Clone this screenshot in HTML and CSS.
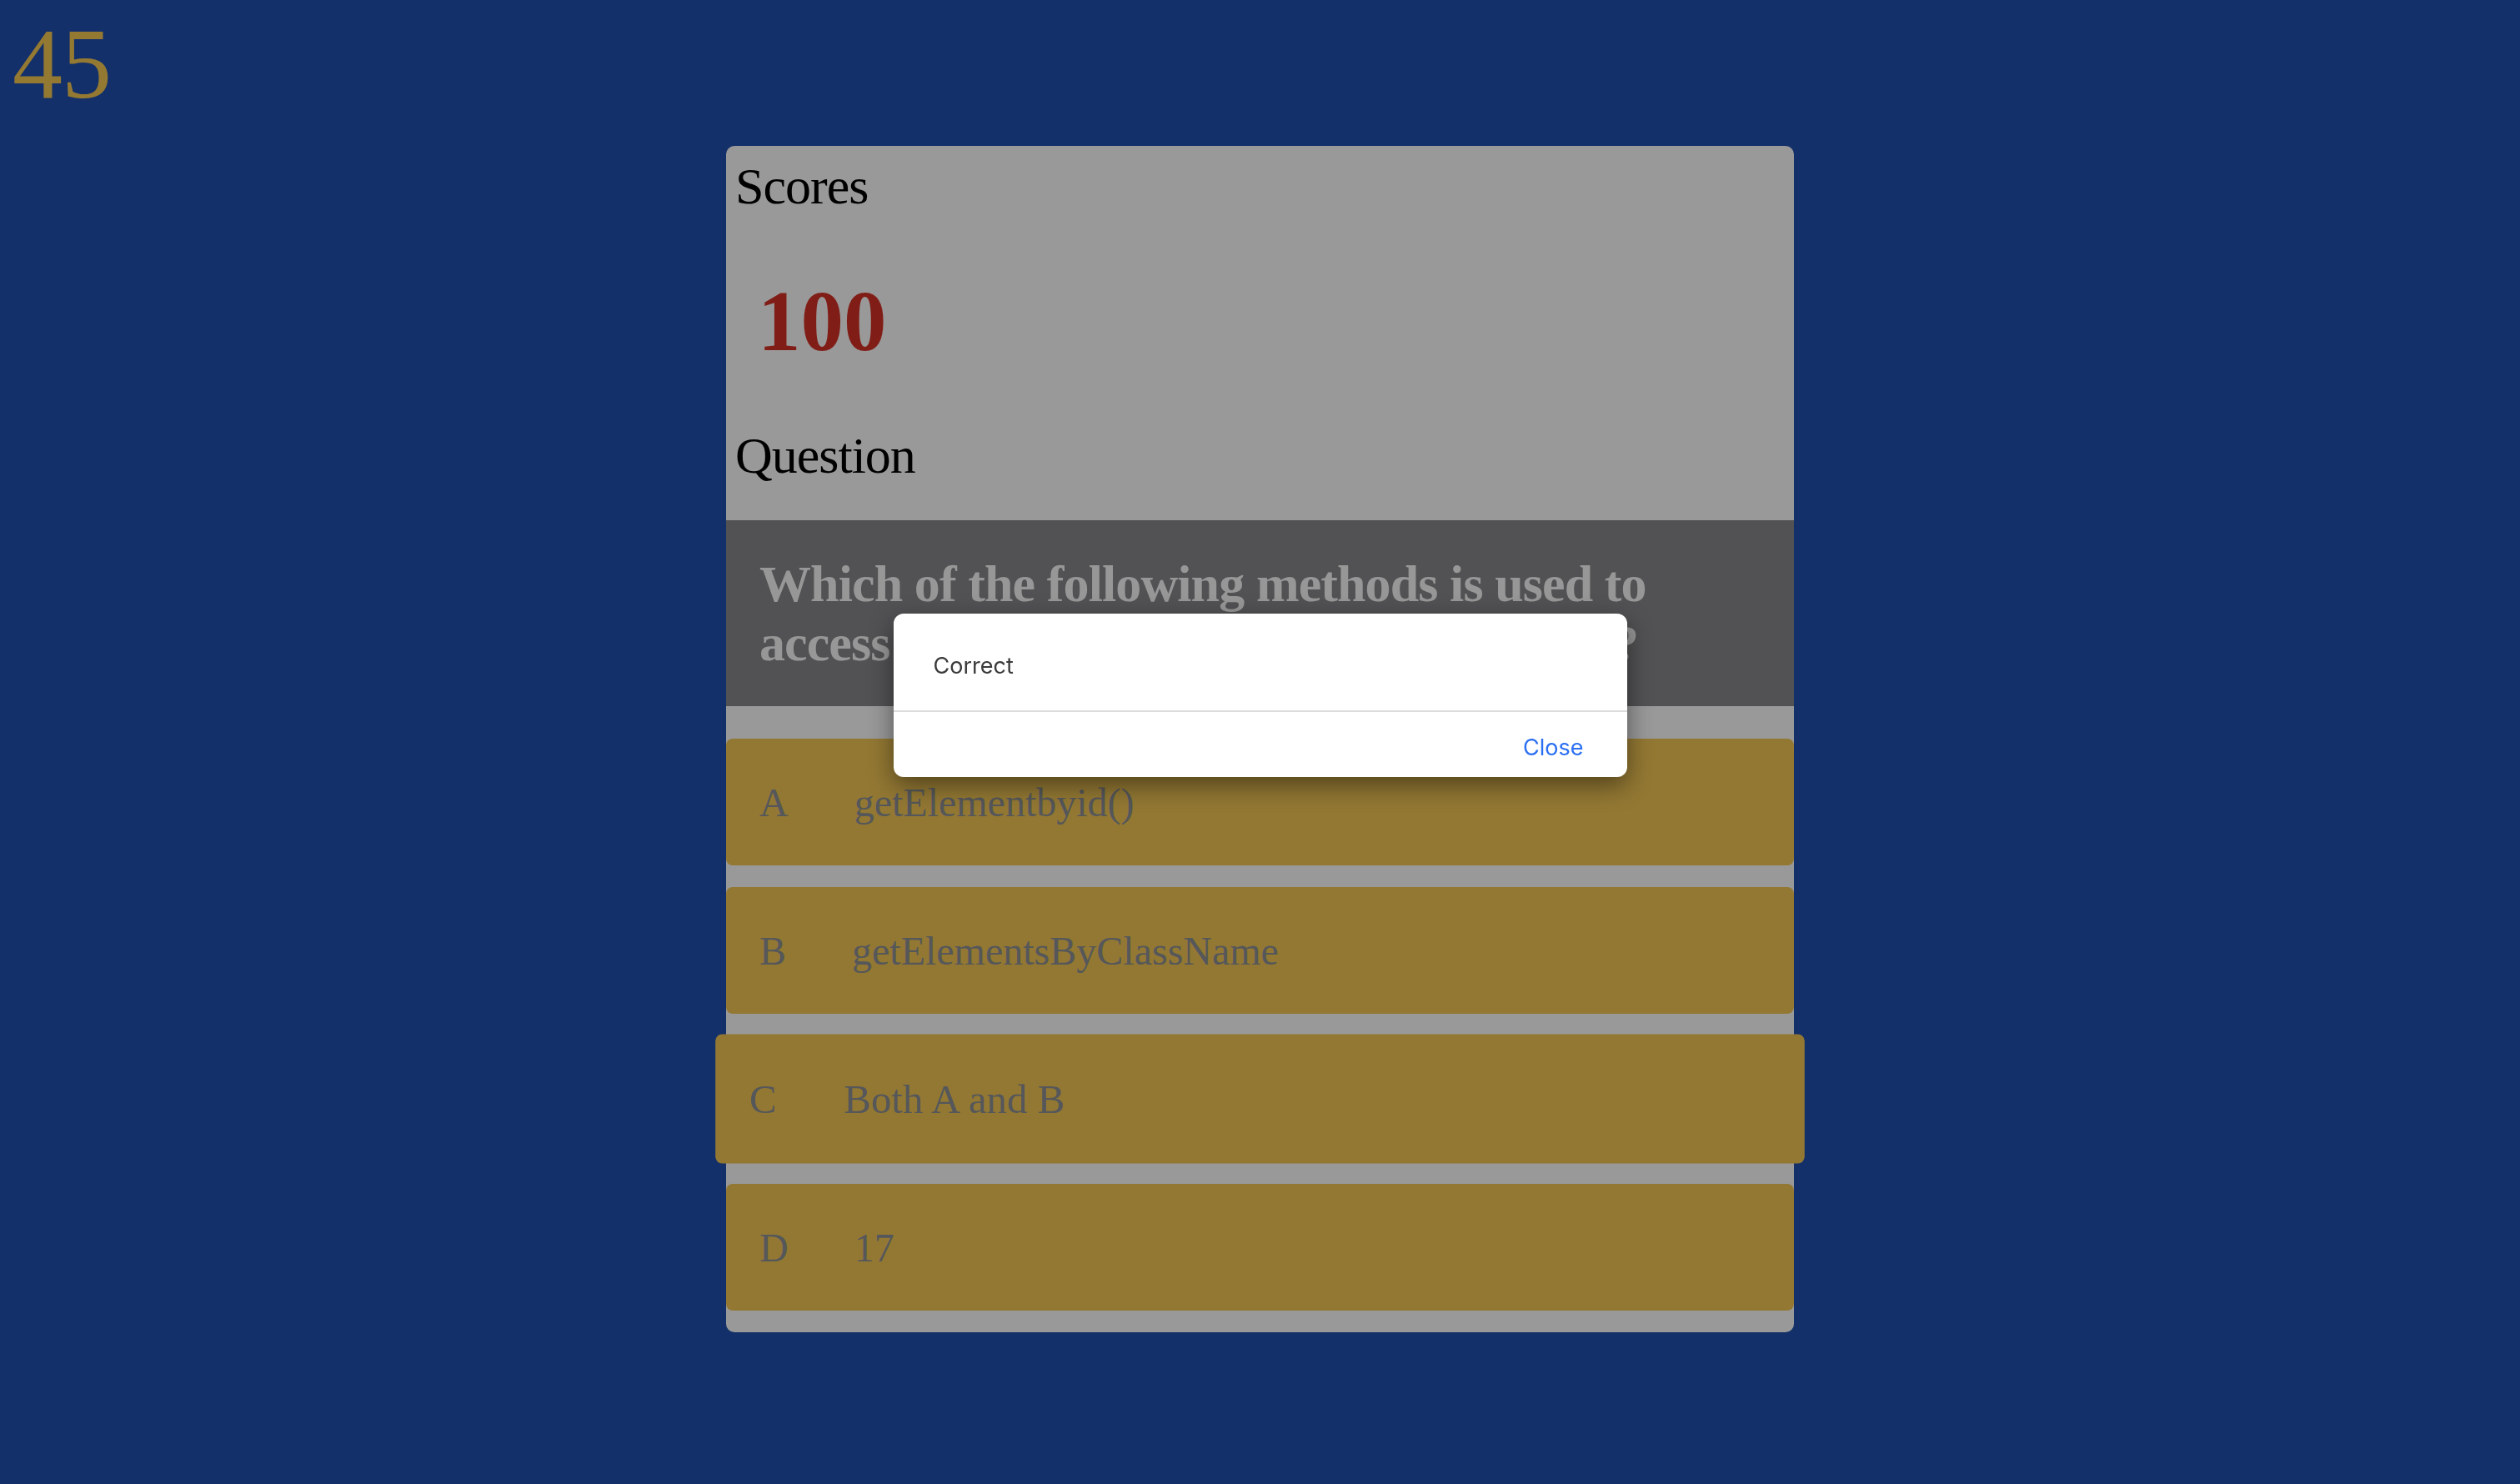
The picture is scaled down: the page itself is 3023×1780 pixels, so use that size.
FILE: index.html
```html
<!DOCTYPE html>
<html lang="en">
<head>
<meta charset="utf-8">
<title>Quiz</title>
<link rel="stylesheet" href="styles.css">
</head>
<body>
  <div class="timer">45</div>
  <main class="card">
    <h1 class="label label-scores">Scores</h1>
    <div class="score">100</div>
    <h1 class="label label-question">Question</h1>
    <div class="question">
      <h2>Which of the following methods is used to access HTML elements using Javascript?</h2>
    </div>
    <ul class="options">
      <li class="option"><span class="letter">A</span><span class="text">getElementbyid()</span></li>
      <li class="option"><span class="letter">B</span><span class="text">getElementsByClassName</span></li>
      <li class="option option-hover"><span class="letter">C</span><span class="text">Both A and B</span></li>
      <li class="option"><span class="letter">D</span><span class="text">17</span></li>
    </ul>
  </main>
  <div class="modal" role="dialog">
    <div class="modal-body">Correct</div>
    <div class="modal-footer"><button class="close-btn" type="button">Close</button></div>
  </div>
</body>
</html>
```
FILE: styles.css
```css
html, body {
  margin: 0;
  padding: 0;
}

body {
  background: #13306a;
  font-family: "Liberation Serif", "Times New Roman", serif;
  min-height: 1780px;
}

.timer {
  font-size: 120px;
  line-height: normal;
  color: #947932;
  padding: 8px 0 0 15px;
  letter-spacing: -1px;
}

.card {
  width: 1281px;
  margin: 29px auto 0;
  background: #999999;
  border-radius: 10px;
  padding-bottom: 26px;
}

.label {
  margin: 0;
  font-size: 62px;
  font-weight: normal;
  line-height: normal;
  color: #000;
  padding-left: 11px;
  letter-spacing: -1px;
}

.label-scores {
  padding-top: 13px;
}

.score {
  font-size: 103px;
  font-weight: bold;
  line-height: normal;
  color: #801d16;
  margin: 67px 0 0 38px;
}

.label-question {
  margin: 67px 0 42px;
}

.question {
  background: #525254;
  padding: 41px 40px 40px 40px;
}

.question h2 {
  margin: 0;
  font-size: 62px;
  font-weight: bold;
  line-height: normal;
  color: #979797;
  letter-spacing: -0.9px;
}

.options {
  list-style: none;
  margin: 39px 0 0;
  padding: 0;
  display: flex;
  flex-direction: column;
  gap: 26px;
}

.option {
  height: 152px;
  box-sizing: border-box;
  display: flex;
  align-items: center;
  padding-left: 40px;
  border-radius: 8px;
  background: #937833;
  color: #55575a;
  font-size: 48px;
  line-height: normal;
}

.option-hover {
  transform: scale(1.02);
}

.letter {
  margin-right: 79px;
}

.modal {
  position: fixed;
  top: 736px;
  left: 50%;
  width: 880px;
  margin-left: -440px;
  background: #ffffff;
  border-radius: 12px;
  box-shadow: 0 10px 30px rgba(0, 0, 0, 0.45);
  font-family: Inter, "Liberation Sans", sans-serif;
  font-size: 27px;
  overflow: hidden;
}

.modal-body {
  height: 118px;
  box-sizing: border-box;
  display: flex;
  align-items: center;
  padding: 8px 48px 0;
  color: #3a3a3a;
  border-bottom: 2px solid #dcdcdc;
}

.modal-footer {
  height: 78px;
  box-sizing: border-box;
  display: flex;
  justify-content: flex-end;
  align-items: center;
  padding: 6px 52px 0 0;
}

.close-btn {
  border: 0;
  background: none;
  padding: 0;
  font: inherit;
  color: #2b6ff2;
  cursor: pointer;
}
```
